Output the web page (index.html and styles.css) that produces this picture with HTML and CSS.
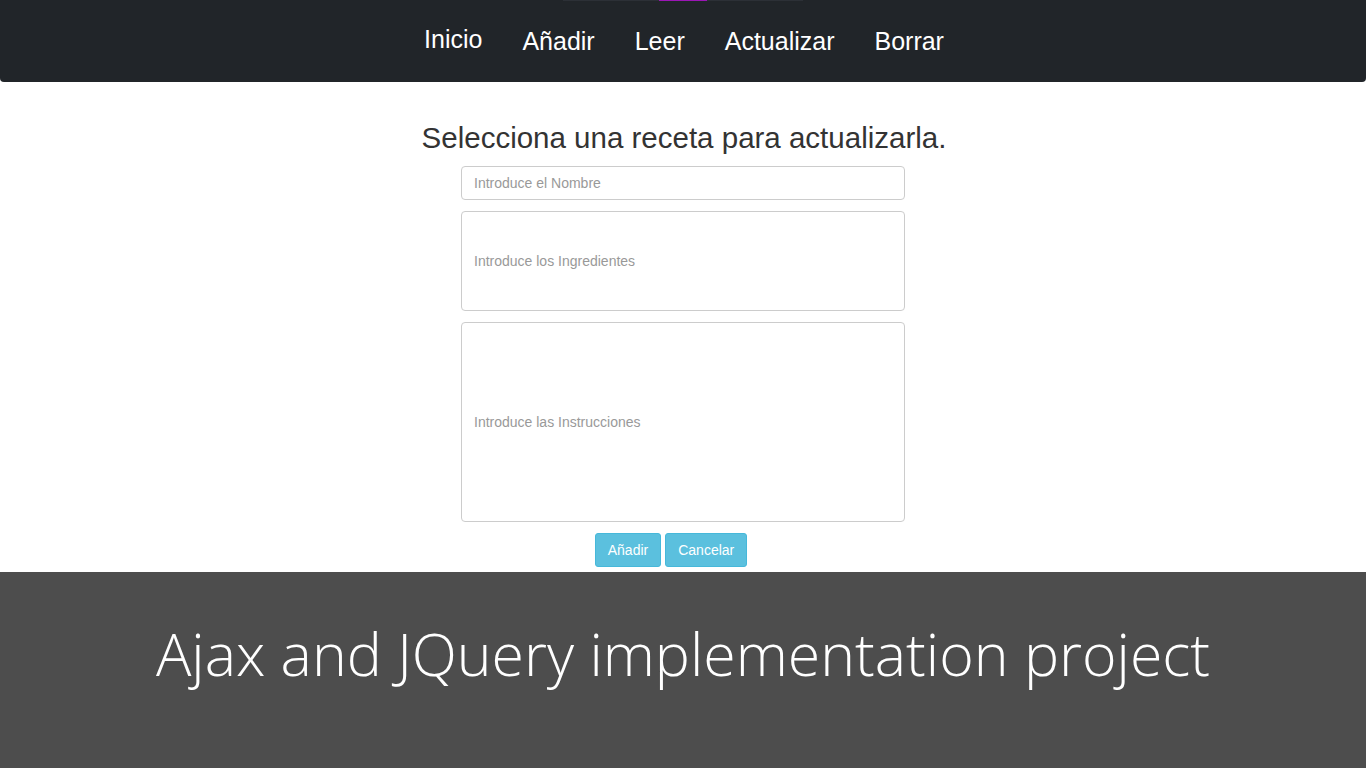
FILE: index.html
```html
<!DOCTYPE html>
<html lang="es">
<head>
  <meta charset="UTF-8">
  <meta name="viewport" content="width=device-width, initial-scale=1.0">
  <title>Recetas</title>
  <link rel="stylesheet" href="styles.css">
</head>
<body>

  <!-- Barra de navegación -->
  <nav class="navbar">
    <div class="nav-top"><span class="nav-active"></span></div>
    <div class="nav-links">
      <a href="#" class="inicio">Inicio</a>
      <a href="#">Añadir</a>
      <a href="#">Leer</a>
      <a href="#">Actualizar</a>
      <a href="#">Borrar</a>
    </div>
  </nav>

  <!-- Formulario -->
  <main class="content">
    <h2>Selecciona una receta para actualizarla.</h2>
    <form class="form">
      <input type="text" class="field" placeholder="Introduce el Nombre">
      <div class="field area area-sm">Introduce los Ingredientes</div>
      <div class="field area area-lg">Introduce las Instrucciones</div>
      <div class="buttons">
        <button type="button" class="btn">Añadir</button>
        <button type="button" class="btn">Cancelar</button>
      </div>
    </form>
  </main>

  <!-- Pie -->
  <footer class="footer">
    <h1>Ajax and JQuery implementation project</h1>
  </footer>

</body>
</html>
```

FILE: styles.css
```css
/* Base */
body {
  margin: 0;
  padding: 0;
  font-family: "Liberation Sans", Arial, sans-serif;
  background: #fff;
  color: #333;
}

/* Navegación */
.navbar {
  background-color: #212529;
  height: 82px;
  border-radius: 0 0 4px 4px;
  position: relative;
}

.nav-top {
  position: absolute;
  top: 0;
  left: 563px;
  width: 240px;
  height: 1px;
  background-color: #2c3036;
}

.nav-active {
  position: absolute;
  left: 96px;
  top: 0;
  width: 48px;
  height: 1px;
  background-color: #9b16b5;
}

.nav-links {
  display: flex;
  justify-content: center;
  align-items: center;
  gap: 40px;
  height: 82px;
  padding-left: 2px;
}

.nav-links a {
  color: #fff;
  text-decoration: none;
  font-size: 25px;
  padding-top: 1px;
}

.nav-links a.inicio {
  margin-top: -5px;
}

/* Contenido */
.content {
  text-align: center;
  padding-top: 39px;
  height: 451px;
}

.content h2 {
  margin: 0 0 11px;
  font-weight: normal;
  font-size: 29.5px;
  line-height: 34px;
  color: #333;
  padding-left: 2px;
}

.form {
  width: 444px;
  margin: 0 auto;
  display: flex;
  flex-direction: column;
  gap: 11px;
}

.field {
  box-sizing: border-box;
  width: 444px;
  border: 1px solid #ccc;
  border-radius: 4px;
  font-family: "Liberation Sans", Arial, sans-serif;
  font-size: 14px;
  color: #999;
  padding: 0 12px;
  text-align: left;
}

input.field {
  height: 34px;
  outline: none;
}

input.field::placeholder {
  color: #999;
}

.area {
  display: flex;
  align-items: center;
}

.area-sm { height: 100px; }
.area-lg { height: 200px; }

.buttons {
  display: flex;
  justify-content: center;
  gap: 4px;
  margin-right: 24px;
}

.btn {
  height: 34px;
  background-color: #5bc0de;
  border: 1px solid #46b8da;
  border-radius: 3px;
  color: #fff;
  font-family: "Liberation Sans", Arial, sans-serif;
  font-size: 14px;
  padding: 0 12px;
}

/* Pie */
.footer {
  background-color: #4d4d4d;
  height: 196px;
  text-align: center;
}

.footer h1 {
  margin: 0;
  padding-top: 46px;
  color: #fff;
  font-family: "Open Sans", sans-serif;
  font-weight: 300;
  font-size: 59px;
  line-height: 70px;
}
```
